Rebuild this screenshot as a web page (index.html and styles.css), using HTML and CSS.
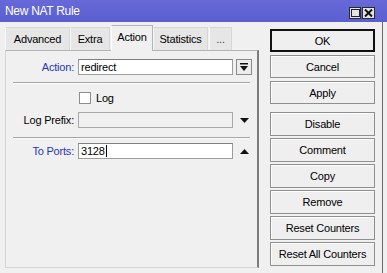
FILE: index.html
```html
<!DOCTYPE html>
<html>
<head>
<meta charset="utf-8">
<title>New NAT Rule</title>
<link rel="stylesheet" href="styles.css">
</head>
<body>
<div class="window">
  <div class="titlebar">
    <span class="title">New NAT Rule</span>
    <div class="wbtns">
      <span class="wbtn"><svg width="9" height="8" viewBox="0 0 9 8"><rect x="0.5" y="0.5" width="8" height="7" fill="none" stroke="#222" stroke-width="1"/></svg></span>
      <span class="wbtn"><svg width="9" height="8" viewBox="0 0 9 8"><path d="M1 0.5 L8 7.5 M8 0.5 L1 7.5" stroke="#111" stroke-width="2" fill="none"/></svg></span>
    </div>
  </div>
  <div class="content">
    <div class="left">
      <div class="tabs">
        <span class="tab t-adv">Advanced</span>
        <span class="tab t-extra">Extra</span>
        <span class="tab t-action active">Action</span>
        <span class="tab t-stats">Statistics</span>
        <span class="tab t-more">...</span>
      </div>
      <div class="panel">
        <div class="row r-action">
          <span class="lbl blue">Action:</span>
          <span class="input">redirect</span>
          <span class="ddbtn"><svg width="8" height="8" viewBox="0 0 8 8"><rect x="0" y="0" width="8" height="1.5" fill="#111"/><path d="M0 3 H8 L4 8 Z" fill="#111"/></svg></span>
        </div>
        <div class="sep"></div>
        <div class="row r-log">
          <span class="lbl"></span>
          <span class="cb"></span>
          <span class="cbtext">Log</span>
        </div>
        <div class="row r-prefix">
          <span class="lbl">Log Prefix:</span>
          <span class="input disabled"></span>
          <span class="tri"><svg width="9" height="5" viewBox="0 0 9 5"><path d="M0 0 H9 L4.5 5 Z" fill="#111"/></svg></span>
        </div>
        <div class="sep sep2"></div>
        <div class="row r-ports">
          <span class="lbl blue">To Ports:</span>
          <span class="input">3128<span class="caret"></span></span>
          <span class="tri"><svg width="9" height="5" viewBox="0 0 9 5"><path d="M0 5 H9 L4.5 0 Z" fill="#111"/></svg></span>
        </div>
      </div>
    </div>
    <div class="buttons">
      <span class="btn focus">OK</span>
      <span class="btn">Cancel</span>
      <span class="btn">Apply</span>
      <span class="btn gap">Disable</span>
      <span class="btn">Comment</span>
      <span class="btn">Copy</span>
      <span class="btn">Remove</span>
      <span class="btn">Reset Counters</span>
      <span class="btn">Reset All Counters</span>
    </div>
  </div>
</div>
</body>
</html>
```

FILE: styles.css
```css
* { box-sizing: border-box; }
html, body { margin: 0; padding: 0; }
body {
  width: 387px;
  height: 273px;
  overflow: hidden;
  background: #f0f0f0;
  font-family: "Liberation Sans", Arial, sans-serif;
  font-size: 11px;
  letter-spacing: -0.2px;
  color: #000;
}
.window {
  width: 387px;
  height: 273px;
  display: flex;
  flex-direction: column;
}
.titlebar {
  height: 22px;
  background: linear-gradient(#6769d8, #5c5fd1);
  display: flex;
  align-items: center;
  padding-left: 5px;
}
.title {
  color: #fff;
  font-size: 12px;
  letter-spacing: -0.3px;
}
.wbtns {
  margin-left: auto;
  margin-right: 12px;
  display: flex;
  gap: 1px;
  margin-top: 4px;
}
.wbtn {
  width: 12px;
  height: 12px;
  background: #e4e4e4;
  border: 1px solid #2a2a2a;
  display: flex;
  align-items: center;
  justify-content: center;
}
.wbtn + .wbtn { width: 13px; }
.content {
  flex: 1;
  display: flex;
  border-right: 1px solid #6a6a6a;
  margin-right: 4px;
}
.left {
  padding-left: 5px;
  padding-top: 3px;
  width: 259px;
  display: flex;
  flex-direction: column;
}
.tabs {
  height: 25px;
  display: flex;
  align-items: flex-end;
  position: relative;
  z-index: 1;
}
.tab {
  height: 23px;
  background: #e6e6e6;
  border: 1px solid #d6d6d6;
  border-bottom: none;
  border-left-color: #f8f8f8;
  display: flex;
  align-items: center;
  justify-content: center;
}
.t-adv { width: 65px; }
.t-extra { width: 40px; }
.t-action { width: 42px; margin-left: 1px; }
.t-stats { width: 55px; }
.t-more { width: 23px; margin-left: 1px; color: #444; }
.tab.active {
  height: 26px;
  margin-bottom: -1px;
  background: #f0f0f0;
  border-color: #b4b4b4;
  border-left-color: #fafafa;
  padding-bottom: 3px;
}
.panel {
  height: 218px;
  border: 1px solid #d4d4d4;
  border-top-color: #b4b4b4;
  border-right: 2px solid #7d7d7d;
  background: #f0f0f0;
  padding-top: 8px;
}
.row {
  display: flex;
  align-items: center;
  height: 16px;
}
.lbl {
  width: 68px;
  text-align: right;
  flex: none;
}
.blue { color: #2a35b8; }
.input {
  margin-left: 4px;
  width: 155px;
  height: 16px;
  background: #fff;
  border: 1px solid #9c9c9c;
  border-top-color: #7f7f7f;
  padding-left: 2px;
  line-height: 14px;
  display: flex;
  align-items: center;
}
.input.disabled {
  background: #f0f0f0;
  border-color: #a8a8a8;
}
.caret {
  width: 1px;
  height: 12px;
  background: #000;
  margin-left: 1px;
}
.ddbtn {
  margin-left: 3px;
  width: 16px;
  height: 16px;
  border: 1px solid #8a8a8a;
  background: #ececec;
  display: flex;
  align-items: center;
  justify-content: center;
}
.tri {
  margin-left: 7px;
  display: flex;
  align-items: center;
}
.sep {
  margin: 7px 0 0 7px;
  width: 237px;
  height: 2px;
  border-top: 1px solid #a6a6a6;
  border-bottom: 1px solid #fbfbfb;
}
.r-log { margin-top: 8px; height: 12px; }
.cb {
  margin-left: 5px;
  width: 12px;
  height: 12px;
  background: #fff;
  border: 1px solid #8e8e8e;
}
.cbtext { margin-left: 5px; }
.r-prefix { margin-top: 8px; }
.sep2 { margin-top: 9px; }
.r-ports { margin-top: 4px; }
.buttons {
  margin-left: 11px;
  padding-top: 7px;
  width: 105px;
  display: flex;
  flex-direction: column;
  gap: 3px;
}
.btn {
  height: 23px;
  border: 1px solid #8f8f8f;
  box-shadow: inset 1px 1px 0 #fdfdfd;
  background: #efefef;
  display: flex;
  align-items: center;
  justify-content: center;
}
.btn.focus {
  border: 2px solid #111;
  box-shadow: none;
}
.btn.gap { margin-top: 5px; height: 24px; }
.btn.gap ~ .btn { height: 24px; margin-top: -1px; }
```
